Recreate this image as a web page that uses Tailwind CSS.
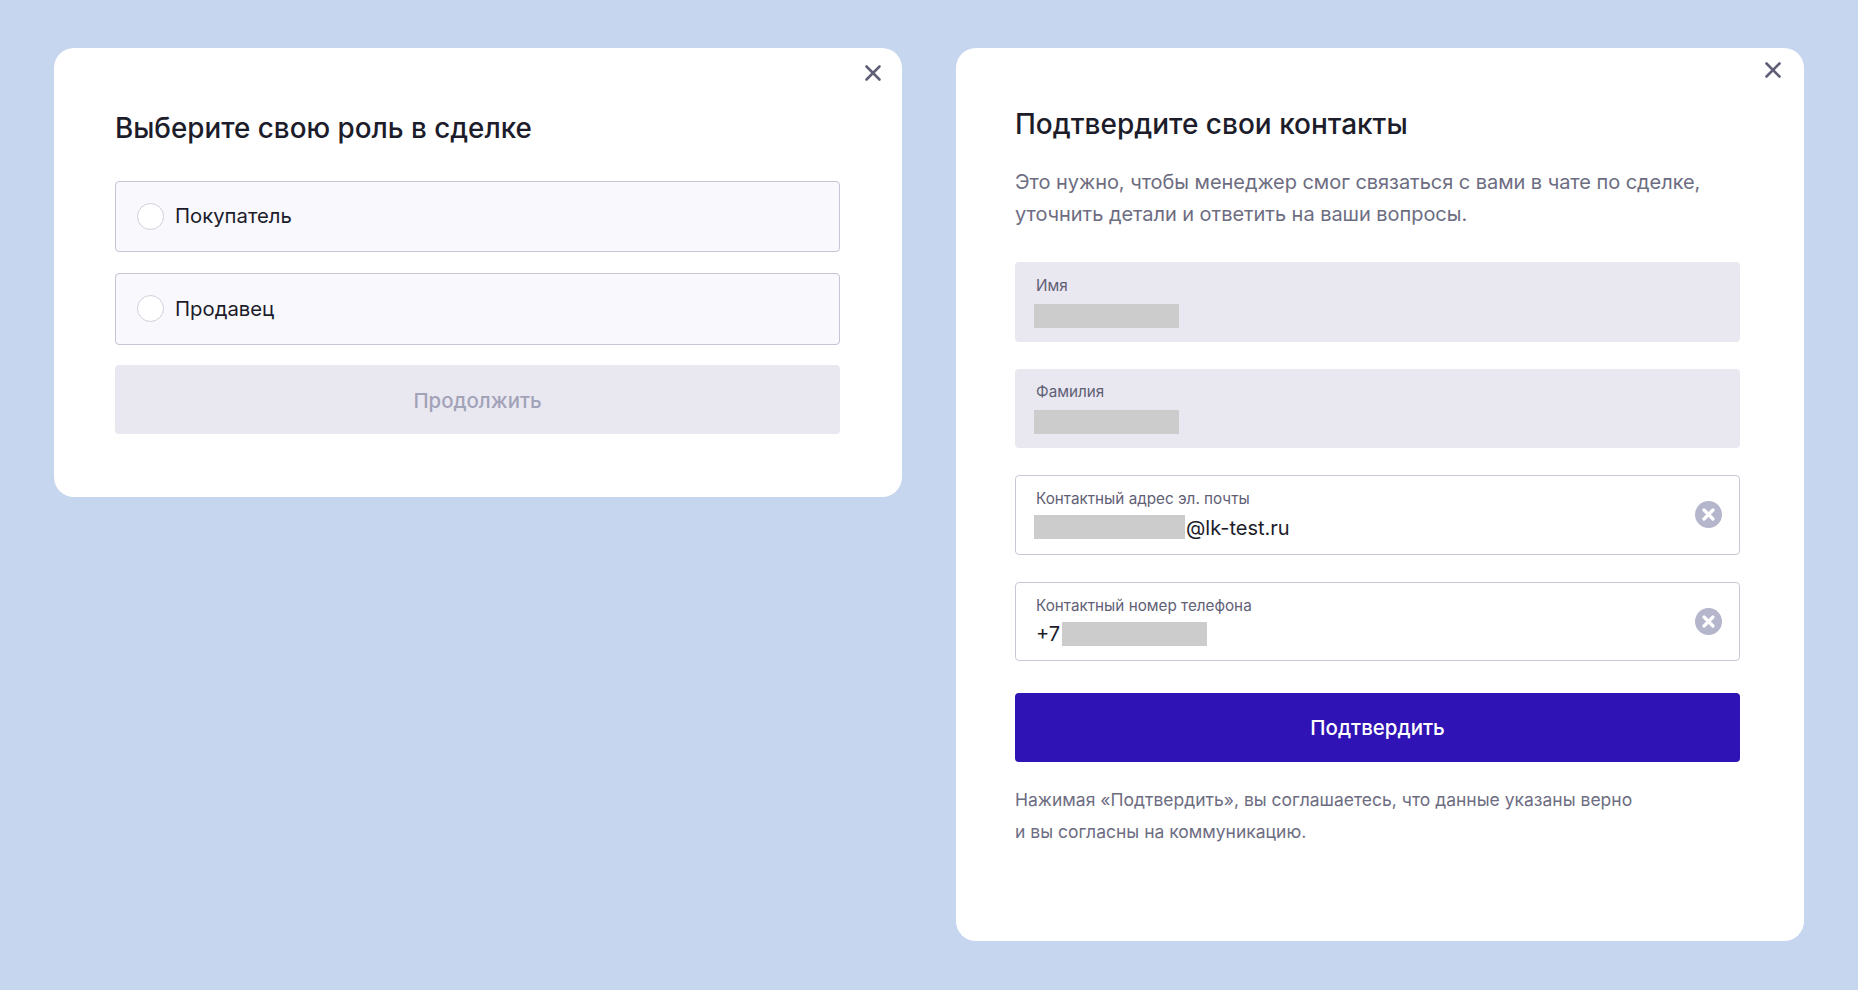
<!DOCTYPE html>
<html lang="ru">
<head>
<meta charset="utf-8">
<title>Подтверждение</title>
<script src="https://cdn.jsdelivr.net/npm/@tailwindcss/browser@4"></script>
</head>
<body class="m-0 bg-[#c6d6ef] font-['Inter','Noto_Sans',sans-serif]">
<main class="flex h-[990px] w-[1858px] items-start gap-[54px] overflow-hidden pl-[54px] pt-[48px]">

  <section class="relative h-[449px] w-[848px] rounded-[20px] bg-white pl-[61px] pr-[62px] pt-[64px]">
    <button class="absolute left-[810px] top-[16px] flex h-[18px] w-[18px] items-center justify-center text-[#5f6078]" aria-label="Закрыть">
      <svg width="18" height="18" viewBox="0 0 18 18" fill="none" stroke="currentColor" stroke-width="2.6" stroke-linecap="round"><path d="M2.5 2.5l13 13M15.5 2.5l-13 13"/></svg>
    </button>
    <h1 class="mb-[37px] text-[27.8px] font-medium leading-[32px] text-[#1c1c2b]">Выберите свою роль в сделке</h1>
    <div class="flex flex-col">
      <label class="flex h-[71px] items-center gap-[11px] rounded-[4px] border border-[#c5c5d3] bg-[#f8f8fd] pb-[1px] pl-[21px]">
        <span class="h-[27px] w-[27px] rounded-full border border-[#d0d0dc] bg-white"></span>
        <span class="text-[20.3px] leading-[28px] text-[#1c1c2b]">Покупатель</span>
      </label>
      <label class="mt-[21px] flex h-[72px] items-center gap-[11px] rounded-[4px] border border-[#c5c5d3] bg-[#f8f8fd] pb-[1px] pl-[21px]">
        <span class="h-[27px] w-[27px] rounded-full border border-[#d0d0dc] bg-white"></span>
        <span class="text-[20.3px] leading-[28px] text-[#1c1c2b]">Продавец</span>
      </label>
      <button class="mt-[20px] h-[69px] rounded-[4px] bg-[#e9e8f1] pt-[3px] text-[20.4px] font-medium text-[#a2a2b8]">Продолжить</button>
    </div>
  </section>

  <section class="relative h-[893px] w-[848px] rounded-[20px] bg-white pl-[59px] pr-[64px] pt-[60px]">
    <button class="absolute left-[808px] top-[13px] flex h-[18px] w-[18px] items-center justify-center text-[#5f6078]" aria-label="Закрыть">
      <svg width="18" height="18" viewBox="0 0 18 18" fill="none" stroke="currentColor" stroke-width="2.6" stroke-linecap="round"><path d="M2.5 2.5l13 13M15.5 2.5l-13 13"/></svg>
    </button>
    <h2 class="mb-[26px] text-[28px] font-medium leading-[32px] text-[#1c1c2b]">Подтвердите свои контакты</h2>
    <p class="mb-[32px] text-[20px] leading-[32px] tracking-[-0.05px] text-[#6d6d82]">Это нужно, чтобы менеджер смог связаться с вами в чате по сделке,<br>уточнить детали и ответить на ваши вопросы.</p>

    <div class="flex flex-col gap-[27px]">
      <div class="h-[79.5px] rounded-[4px] bg-[#e9e8f1] pl-[19px] pt-[14px]">
        <div class="pl-[2px] text-[15.25px] leading-[20px] text-[#5f6075]">Имя</div>
        <div class="mt-[8px] h-[24px] w-[145px] bg-[#cccccc]"></div>
      </div>
      <div class="h-[79.5px] rounded-[4px] bg-[#e9e8f1] pl-[19px] pt-[13px]">
        <div class="pl-[2px] text-[15.25px] leading-[20px] text-[#5f6075]">Фамилия</div>
        <div class="mt-[8px] h-[24px] w-[145px] bg-[#cccccc]"></div>
      </div>
      <div class="flex h-[79.5px] items-center justify-between rounded-[4px] border border-[#c8c8d4] bg-white pl-[18px] pr-[18px]">
        <div>
          <div class="pl-[2px] text-[15.25px] leading-[20px] text-[#5f6075]">Контактный адрес эл. почты</div>
          <div class="mt-[5px] flex h-[26px] items-center text-[20px] leading-[28px] text-[#1c1c2b]"><span class="h-[24px] w-[151px] bg-[#cccccc]"></span><span class="pl-[1px] pt-[1px]">@lk-test.ru</span></div>
        </div>
        <svg class="mr-[-0.5px]" width="27" height="27" viewBox="0 0 27 27" aria-hidden="true"><circle cx="13.5" cy="13.5" r="13.5" fill="#b5b5cc"/><path d="M9 9l9 9M18 9l-9 9" stroke="#fff" stroke-width="3.2" stroke-linecap="round"/></svg>
      </div>
      <div class="flex h-[79.5px] items-center justify-between rounded-[4px] border border-[#c8c8d4] bg-white pl-[18px] pr-[18px]">
        <div>
          <div class="pl-[2px] text-[15.25px] leading-[20px] text-[#5f6075]">Контактный номер телефона</div>
          <div class="mt-[5px] flex h-[26px] items-center text-[20px] leading-[28px] text-[#1c1c2b]"><span class="pl-[2px] pr-[2px] pt-[1px]">+7</span><span class="h-[24px] w-[145px] bg-[#cccccc]"></span></div>
        </div>
        <svg class="mr-[-0.5px]" width="27" height="27" viewBox="0 0 27 27" aria-hidden="true"><circle cx="13.5" cy="13.5" r="13.5" fill="#b5b5cc"/><path d="M9 9l9 9M18 9l-9 9" stroke="#fff" stroke-width="3.2" stroke-linecap="round"/></svg>
      </div>
    </div>

    <button class="mt-[32px] h-[69px] w-full rounded-[4px] bg-[#3013b4] pt-[1px] text-[20.5px] font-medium text-white">Подтвердить</button>
    <p class="mt-[21.5px] text-[17.5px] leading-[32px] text-[#6d6d82]">Нажимая «Подтвердить», вы соглашаетесь, что данные указаны верно<br>и вы согласны на коммуникацию.</p>
  </section>
</main>
</body>
</html>
